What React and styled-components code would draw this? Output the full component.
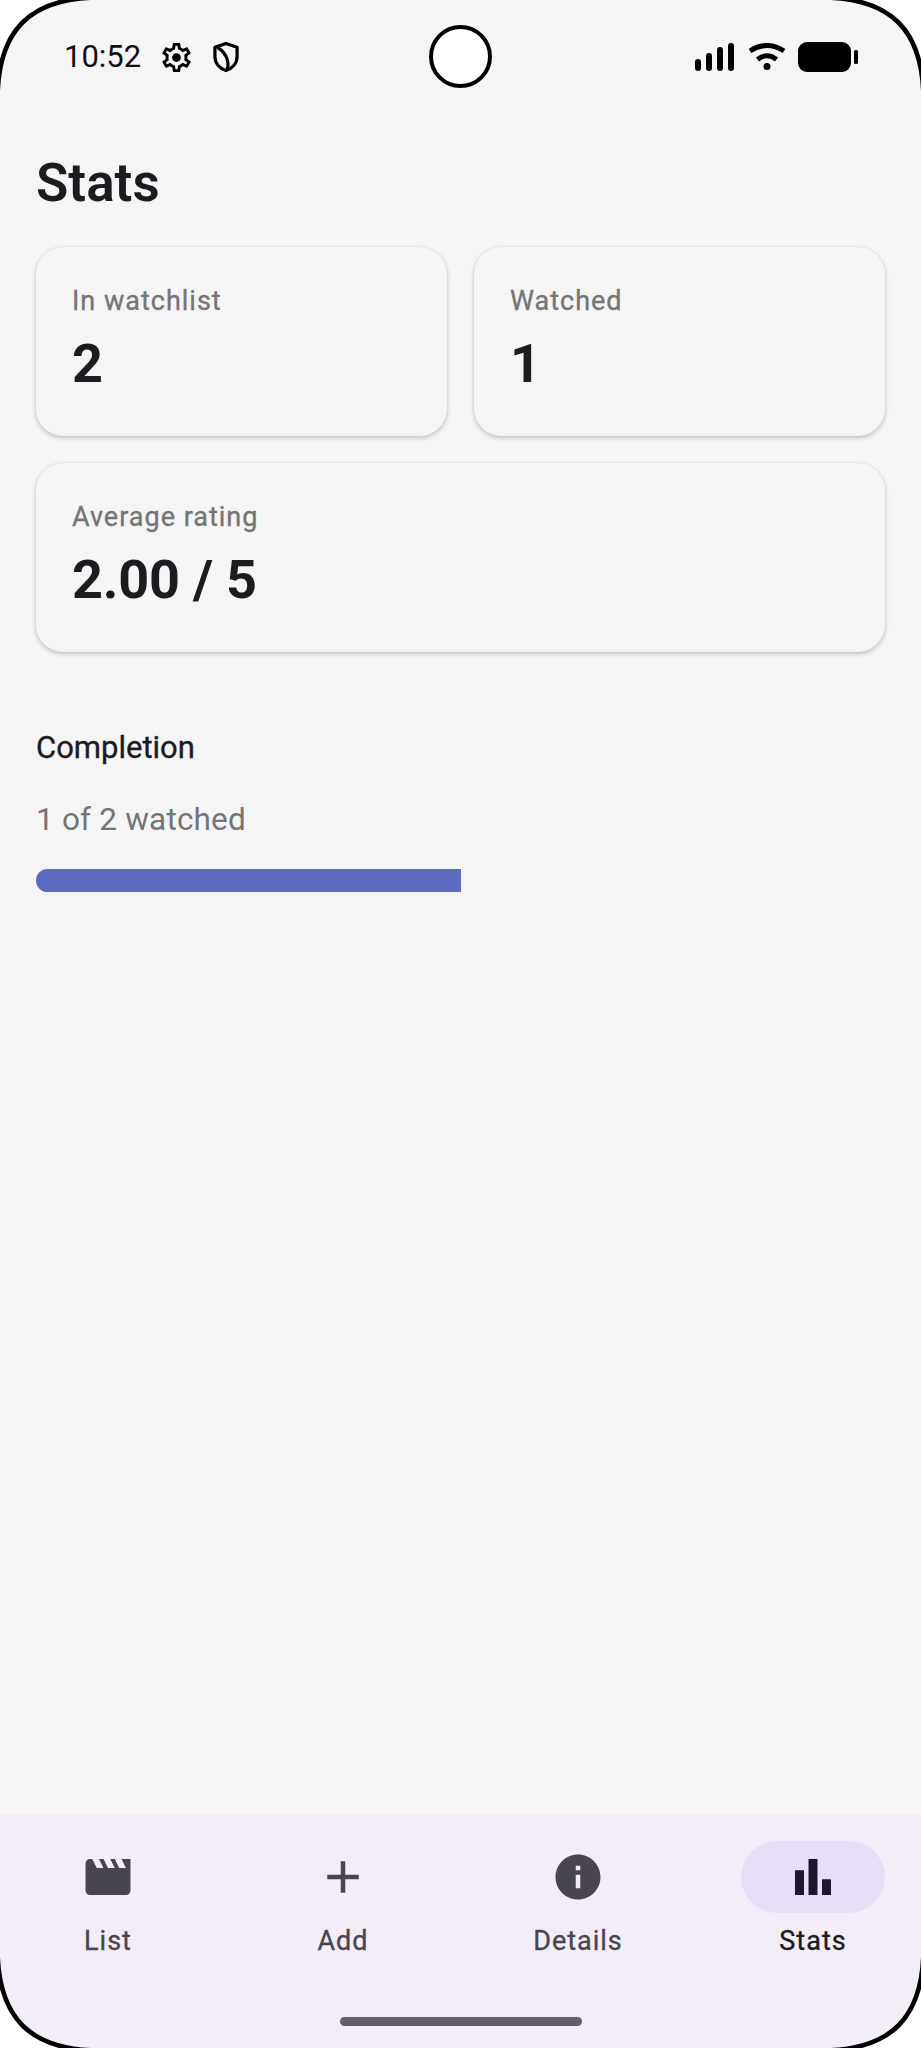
import React from "react";
import styled, { createGlobalStyle } from "styled-components";

const GlobalStyle = createGlobalStyle`
  html, body {
    margin: 0;
    padding: 0;
    background: #fff;
  }
  * {
    box-sizing: border-box;
  }
`;

const Screen = styled.div`
  position: relative;
  width: 921px;
  height: 2048px;
  display: flex;
  flex-direction: column;
  overflow: hidden;
  background: #f5f5f5;
  font-family: Roboto, "Liberation Sans", sans-serif;
`;

const StatusBar = styled.div`
  flex: none;
  height: 114px;
  padding: 0 63px 0 64px;
  display: flex;
  align-items: center;
  justify-content: space-between;
  color: #000;
`;

const StatusGroup = styled.div`
  display: flex;
  align-items: center;
  gap: ${(p) => p.$gap}px;
`;

const Clock = styled.span`
  font-size: 31px;
  line-height: 36px;
  color: #111;
`;

const Camera = styled.div`
  position: absolute;
  left: 429px;
  top: 25px;
  width: 63px;
  height: 63px;
  border-radius: 50%;
  border: 4px solid #000;
  background: #fff;
`;

const Content = styled.main`
  flex: 1;
  padding: 39px 36px 0;
`;

const Title = styled.h1`
  margin: 0 0 34px;
  font-size: 53px;
  line-height: 60px;
  font-weight: 600;
  color: #1c1b1f;
`;

const Grid = styled.div`
  display: grid;
  grid-template-columns: 1fr 1fr;
  gap: 27px;
`;

const Card = styled.div`
  grid-column: ${(p) => (p.$wide ? "1 / -1" : "auto")};
  height: 189px;
  padding: 38px 36px 0;
  border-radius: 27px;
  background: #f5f5f5;
  box-shadow: 0 2px 5px rgba(0, 0, 0, 0.2), 0 0 2px rgba(0, 0, 0, 0.08);
`;

const CardLabel = styled.div`
  font-size: 27px;
  line-height: 32px;
  font-weight: 400;
  letter-spacing: 1px;
  -webkit-text-stroke: 0.35px #757575;
  color: #757575;
`;

const CardValue = styled.div`
  margin-top: 15px;
  font-size: 54px;
  line-height: 64px;
  font-weight: 700;
  letter-spacing: -0.2px;
  color: #1c1b1f;
`;

const Section = styled.section`
  margin-top: 77px;
`;

const SectionTitle = styled.h2`
  margin: 0;
  font-size: 31px;
  line-height: 38px;
  font-weight: 400;
  -webkit-text-stroke: 0.35px #1c1b1f;
  color: #1c1b1f;
`;

const SectionText = styled.p`
  margin: 34px 0 0;
  font-size: 31.5px;
  line-height: 38px;
  font-weight: 400;
  letter-spacing: 0.2px;
  color: #757575;
`;

const Track = styled.div`
  margin-top: 30px;
  height: 23px;
  border-radius: 12px 0 0 12px;
  overflow: hidden;
`;

const Fill = styled.div`
  height: 100%;
  background: #5c6bc0;
`;

const BottomNav = styled.nav`
  flex: none;
  height: 234px;
  padding: 27px 36px 0;
  display: flex;
  justify-content: space-between;
  background: #f3edf7;
`;

const NavItem = styled.div`
  width: 144px;
  display: flex;
  flex-direction: column;
  align-items: center;
  gap: 12px;
`;

const NavIcon = styled.div`
  width: 144px;
  height: 72px;
  border-radius: 36px;
  display: flex;
  align-items: center;
  justify-content: center;
  color: ${(p) => (p.$active ? "#1d192b" : "#49454f")};
  background: ${(p) => (p.$active ? "#e8def8" : "transparent")};
`;

const NavLabel = styled.span`
  font-size: 27px;
  line-height: 32px;
  font-weight: 400;
  letter-spacing: 1px;
  -webkit-text-stroke: 0.35px ${(p) => (p.$active ? "#1c1b1f" : "#49454f")};
  color: ${(p) => (p.$active ? "#1c1b1f" : "#49454f")};
`;

const HomeBar = styled.div`
  position: absolute;
  left: 340px;
  top: 2017px;
  width: 242px;
  height: 9px;
  border-radius: 5px;
  background: #625f66;
`;

const Frame = styled.svg`
  position: absolute;
  left: 0;
  top: 0;
  pointer-events: none;
`;

const GearIcon = () => (
  <svg width="35" height="35" viewBox="0 0 24 24" fill="#000">
    <path d="M19.43 12.98c.04-.32.07-.64.07-.98 0-.34-.03-.66-.07-.98l2.11-1.65c.19-.15.24-.42.12-.64l-2-3.46c-.09-.16-.26-.25-.44-.25-.06 0-.12.01-.17.03l-2.49 1c-.52-.4-1.08-.73-1.69-.98l-.38-2.65C14.46 2.18 14.25 2 14 2h-4c-.25 0-.46.18-.49.42l-.38 2.65c-.61.25-1.17.59-1.69.98l-2.49-1c-.06-.02-.12-.03-.18-.03-.17 0-.34.09-.43.25l-2 3.46c-.13.22-.07.49.12.64l2.11 1.65c-.04.32-.07.65-.07.98 0 .33.03.66.07.98l-2.11 1.65c-.19.15-.24.42-.12.64l2 3.46c.09.16.26.25.44.25.06 0 .12-.01.17-.03l2.49-1c.52.4 1.08.73 1.69.98l.38 2.65c.03.24.24.42.49.42h4c.25 0 .46-.18.49-.42l.38-2.65c.61-.25 1.17-.59 1.69-.98l2.49 1c.06.02.12.03.18.03.17 0 .34-.09.43-.25l2-3.46c.12-.22.07-.49-.12-.64l-2.11-1.65zm-1.98-1.71c.04.31.05.52.05.73 0 .21-.02.43-.05.73l-.14 1.13.89.7 1.08.84-.7 1.21-1.27-.51-1.04-.42-.9.68c-.43.32-.84.56-1.25.73l-1.06.43-.16 1.13-.2 1.35h-1.4l-.19-1.35-.16-1.13-1.06-.43c-.43-.18-.83-.41-1.23-.71l-.91-.7-1.06.43-1.27.51-.7-1.21 1.08-.84.89-.7-.14-1.13c-.03-.31-.05-.54-.05-.74s.02-.43.05-.73l.14-1.13-.89-.7-1.08-.84.7-1.21 1.27.51 1.04.42.9-.68c.43-.32.84-.56 1.25-.73l1.06-.43.16-1.13.2-1.35h1.39l.19 1.35.16 1.13 1.06.43c.43.18.83.41 1.23.71l.91.7 1.06-.43 1.27-.51.7 1.21-1.07.85-.89.7.14 1.13z" />
    <circle cx="12" cy="12" r="3" />
  </svg>
);

const ShieldIcon = () => (
  <svg width="30" height="32" viewBox="0 0 24 26" fill="none" stroke="#000" strokeWidth="2.6" strokeLinejoin="round">
    <path d="M12 2l9 3v7.5c0 5.5-3.8 9.7-9 11.5-5.2-1.8-9-6-9-11.5V5z" />
    <path d="M5 5.5c3 1 5 3.5 7 7 1.5 3 2.500 6 1 11" />
  </svg>
);

const SignalIcon = () => (
  <svg width="40" height="28" viewBox="0 0 40 28" fill="#000">
    <rect x="0" y="16" width="6" height="12" rx="3" />
    <rect x="11" y="10" width="6" height="18" rx="3" />
    <rect x="22" y="4" width="6" height="24" rx="3" />
    <rect x="33" y="0" width="6" height="28" rx="3" />
  </svg>
);

const WifiIcon = () => (
  <svg width="38" height="28" viewBox="0 0 38 28" fill="none" stroke="#000" strokeWidth="5">
    <path d="M2 8Q19 -3 36 8" />
    <path d="M9.5 16.5Q19 9 28.5 16.5" />
    <circle cx="19" cy="23.5" r="3.5" fill="#000" stroke="none" />
  </svg>
);

const BatteryIcon = () => (
  <svg width="60" height="30" viewBox="0 0 60 30" fill="#000">
    <rect x="0" y="0" width="53" height="30" rx="9" />
    <rect x="56" y="8" width="4" height="14" rx="1.5" />
  </svg>
);

const MovieIcon = () => (
  <svg width="54" height="54" viewBox="0 0 24 24" fill="currentColor">
    <path d="M18 4l2 4h-3l-2-4h-2l2 4h-3l-2-4H8l2 4H7L5 4H4c-1.1 0-2 .9-2 2v12c0 1.1.9 2 2 2h16c1.1 0 2-.9 2-2V4h-4z" />
  </svg>
);

const AddIcon = () => (
  <svg width="54" height="54" viewBox="0 0 24 24" fill="currentColor">
    <path d="M19 13h-6v6h-2v-6H5v-2h6V5h2v6h6v2z" />
  </svg>
);

const InfoIcon = () => (
  <svg width="54" height="54" viewBox="0 0 24 24" fill="currentColor">
    <path d="M12 2C6.48 2 2 6.48 2 12s4.48 10 10 10 10-4.48 10-10S17.52 2 12 2zm1 15h-2v-6h2v6zm0-8h-2V7h2v2z" />
  </svg>
);

const BarChartIcon = () => (
  <svg width="54" height="54" viewBox="0 0 24 24" fill="currentColor">
    <path d="M4 9h4v11H4zm12 4h4v7h-4zm-6-9h4v16h-4z" />
  </svg>
);

const stats = [
  { label: "In watchlist", value: "2" },
  { label: "Watched", value: "1" },
  { label: "Average rating", value: "2.00 / 5", wide: true },
];

const navItems = [
  { label: "List", Icon: MovieIcon },
  { label: "Add", Icon: AddIcon },
  { label: "Details", Icon: InfoIcon },
  { label: "Stats", Icon: BarChartIcon, active: true },
];

const framePath =
  "M-2.5 100C-2.5 30 30 -2.5 100 -2.5H821C891 -2.5 923.5 30 923.5 100V1948C923.5 2018 891 2050.5 821 2050.5H100C30 2050.5 -2.5 2018 -2.5 1948Z";

const App = () => {
  const watched = 1;
  const total = 2;

  return (
    <Screen>
      <GlobalStyle />
      <StatusBar>
        <StatusGroup $gap={17.5}>
          <Clock>10:52</Clock>
          <GearIcon />
          <ShieldIcon />
        </StatusGroup>
        <StatusGroup $gap={12.5}>
          <SignalIcon />
          <WifiIcon />
          <BatteryIcon />
        </StatusGroup>
      </StatusBar>
      <Camera />
      <Content>
        <Title>Stats</Title>
        <Grid>
          {stats.map((s) => (
            <Card key={s.label} $wide={s.wide}>
              <CardLabel>{s.label}</CardLabel>
              <CardValue>{s.value}</CardValue>
            </Card>
          ))}
        </Grid>
        <Section>
          <SectionTitle>Completion</SectionTitle>
          <SectionText>
            {watched} of {total} watched
          </SectionText>
          <Track>
            <Fill style={{ width: `${(watched / total) * 100}%` }} />
          </Track>
        </Section>
      </Content>
      <BottomNav>
        {navItems.map(({ label, Icon, active }) => (
          <NavItem key={label}>
            <NavIcon $active={active}>
              <Icon />
            </NavIcon>
            <NavLabel $active={active}>{label}</NavLabel>
          </NavItem>
        ))}
      </BottomNav>
      <HomeBar />
      <Frame width="921" height="2048" viewBox="0 0 921 2048">
        <path d={`M-5 -5H926V2053H-5Z ${framePath}`} fill="#fff" fillRule="evenodd" />
        <path d={framePath} fill="none" stroke="#000" strokeWidth="4.6" />
      </Frame>
    </Screen>
  );
};

export default App;
